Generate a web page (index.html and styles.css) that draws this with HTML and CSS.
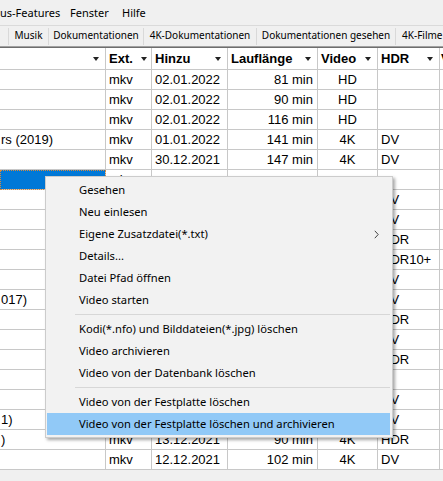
FILE: index.html
```html
<!DOCTYPE html>
<html lang="de">
<head>
<meta charset="utf-8">
<title>Filmliste</title>
<link rel="stylesheet" href="styles.css">
</head>
<body>
<div class="menubar">
  <span class="mi m1">us-Features</span>
  <span class="mi m2">Fenster</span>
  <span class="mi m3">Hilfe</span>
</div>
<div class="tabs">
  <div class="tab t0"></div>
  <div class="tab t1">Musik</div>
  <div class="tab t2">Dokumentationen</div>
  <div class="tab t3">4K-Dokumentationen</div>
  <div class="tab t4">Dokumentationen gesehen</div>
  <div class="tab t5">4K-Filme</div>
</div>
<div class="grid">
  <div class="row head">
    <div class="c c1"><span class="lbl"></span><i class="arr"></i></div>
    <div class="c c2"><span class="lbl">Ext.</span><i class="arr"></i></div>
    <div class="c c3"><span class="lbl">Hinzu</span><i class="arr"></i></div>
    <div class="c c4"><span class="lbl">Lauflänge</span><i class="arr"></i></div>
    <div class="c c5"><span class="lbl">Video</span><i class="arr"></i></div>
    <div class="c c6"><span class="lbl">HDR</span><i class="arr"></i></div>
    <div class="c c7"><span class="lbl">Ver</span></div>
  </div>
  <div class="row"><div class="c c1"></div><div class="c c2">mkv</div><div class="c c3">02.01.2022</div><div class="c c4">81 min</div><div class="c c5">HD</div><div class="c c6"></div><div class="c c7"></div></div>
  <div class="row"><div class="c c1"></div><div class="c c2">mkv</div><div class="c c3">02.01.2022</div><div class="c c4">90 min</div><div class="c c5">HD</div><div class="c c6"></div><div class="c c7"></div></div>
  <div class="row"><div class="c c1"></div><div class="c c2">mkv</div><div class="c c3">02.01.2022</div><div class="c c4">116 min</div><div class="c c5">HD</div><div class="c c6"></div><div class="c c7"></div></div>
  <div class="row"><div class="c c1">rs (2019)</div><div class="c c2">mkv</div><div class="c c3">01.01.2022</div><div class="c c4">141 min</div><div class="c c5">4K</div><div class="c c6">DV</div><div class="c c7"></div></div>
  <div class="row"><div class="c c1"></div><div class="c c2">mkv</div><div class="c c3">30.12.2021</div><div class="c c4">147 min</div><div class="c c5">4K</div><div class="c c6">DV</div><div class="c c7"></div></div>
  <div class="row"><div class="c c1 sel"></div><div class="c c2">mkv</div><div class="c c3"></div><div class="c c4"></div><div class="c c5"></div><div class="c c6"></div><div class="c c7"></div></div>
  <div class="row"><div class="c c1"></div><div class="c c2">mkv</div><div class="c c3">28.12.2021</div><div class="c c4">128 min</div><div class="c c5">4K</div><div class="c c6">DV</div><div class="c c7"></div></div>
  <div class="row"><div class="c c1"></div><div class="c c2">mkv</div><div class="c c3">27.12.2021</div><div class="c c4">112 min</div><div class="c c5">4K</div><div class="c c6">DV</div><div class="c c7"></div></div>
  <div class="row"><div class="c c1"></div><div class="c c2">mkv</div><div class="c c3">26.12.2021</div><div class="c c4">134 min</div><div class="c c5">4K</div><div class="c c6">HDR</div><div class="c c7"></div></div>
  <div class="row"><div class="c c1"></div><div class="c c2">mkv</div><div class="c c3">25.12.2021</div><div class="c c4">105 min</div><div class="c c5">4K</div><div class="c c6">HDR10+</div><div class="c c7"></div></div>
  <div class="row"><div class="c c1"></div><div class="c c2">mkv</div><div class="c c3">24.12.2021</div><div class="c c4">99 min</div><div class="c c5">4K</div><div class="c c6">DV</div><div class="c c7"></div></div>
  <div class="row"><div class="c c1">017)</div><div class="c c2">mkv</div><div class="c c3">23.12.2021</div><div class="c c4">121 min</div><div class="c c5">4K</div><div class="c c6">DV</div><div class="c c7"></div></div>
  <div class="row"><div class="c c1"></div><div class="c c2">mkv</div><div class="c c3">22.12.2021</div><div class="c c4">96 min</div><div class="c c5">4K</div><div class="c c6">HDR</div><div class="c c7"></div></div>
  <div class="row"><div class="c c1"></div><div class="c c2">mkv</div><div class="c c3">21.12.2021</div><div class="c c4">118 min</div><div class="c c5">4K</div><div class="c c6">DV</div><div class="c c7"></div></div>
  <div class="row"><div class="c c1"></div><div class="c c2">mkv</div><div class="c c3">20.12.2021</div><div class="c c4">109 min</div><div class="c c5">4K</div><div class="c c6">HDR</div><div class="c c7"></div></div>
  <div class="row"><div class="c c1"></div><div class="c c2">mkv</div><div class="c c3">19.12.2021</div><div class="c c4">93 min</div><div class="c c5">HD</div><div class="c c6"></div><div class="c c7"></div></div>
  <div class="row"><div class="c c1"></div><div class="c c2">mkv</div><div class="c c3">17.12.2021</div><div class="c c4">125 min</div><div class="c c5">4K</div><div class="c c6">DV</div><div class="c c7"></div></div>
  <div class="row"><div class="c c1">1)</div><div class="c c2">mkv</div><div class="c c3">15.12.2021</div><div class="c c4">131 min</div><div class="c c5">4K</div><div class="c c6">DV</div><div class="c c7"></div></div>
  <div class="row"><div class="c c1">)</div><div class="c c2">mkv</div><div class="c c3">13.12.2021</div><div class="c c4">90 min</div><div class="c c5">4K</div><div class="c c6">HDR</div><div class="c c7"></div></div>
  <div class="row"><div class="c c1"></div><div class="c c2">mkv</div><div class="c c3">12.12.2021</div><div class="c c4">102 min</div><div class="c c5">4K</div><div class="c c6">DV</div><div class="c c7"></div></div>
</div>

<div class="ctx">
  <div class="item">Gesehen</div>
  <div class="item">Neu einlesen</div>
  <div class="item sub">Eigene Zusatzdatei(*.txt)<svg class="chev" width="5" height="9" viewBox="0 0 5 9"><path d="M0.8 0.8 L4.2 4.5 L0.8 8.2" fill="none" stroke="#444" stroke-width="1"/></svg></div>
  <div class="item">Details...</div>
  <div class="item">Datei Pfad öffnen</div>
  <div class="item">Video starten</div>
  <div class="sep"></div>
  <div class="item">Kodi(*.nfo) und Bilddateien(*.jpg) löschen</div>
  <div class="item">Video archivieren</div>
  <div class="item">Video von der Datenbank löschen</div>
  <div class="sep"></div>
  <div class="item">Video von der Festplatte löschen</div>
  <div class="item hot">Video von der Festplatte löschen und archivieren</div>
</div>
</body>
</html>
```
FILE: styles.css
```css
html, body {
  margin: 0;
  padding: 0;
}
body {
  width: 443px;
  height: 481px;
  overflow: hidden;
  position: relative;
  background: #f0f0f0;
  font-family: "Noto Sans", "Open Sans", sans-serif;
  color: #000;
}

/* menu bar */
.menubar {
  height: 25px;
  display: flex;
  align-items: center;
  font-size: 11px;
  background: #f0f0f0;
  white-space: nowrap;
}
.mi { flex: none; }
.mi.m1 { width: 70px; }
.mi.m2 { width: 52px; }

/* tab strip */
.tabs {
  height: 19px;
  border-top: 1px solid #dadada;
  display: flex;
  font-size: 10px;
  white-space: nowrap;
  overflow: hidden;
  margin-bottom: 1px;
}
.tab {
  flex: none;
  box-sizing: border-box;
  border-right: 1px solid #d9d9d9;
  margin-top: 2px;
  height: 17px;
  line-height: 15px;
  text-align: center;
}
.t0 { width: 9px; }
.t1 { width: 40px; }
.t2 { width: 95px; }
.t3 { width: 113px; }
.t4 { width: 139px; }
.t5 { width: 60px; border-right: none; text-align: left; padding-left: 6px; }

/* grid */
.grid {
  background: #fff;
  border-top: 1px solid #a0a0a0;
  font-family: "Liberation Sans", Arial, sans-serif;
  font-size: 13px;
  width: 500px;
}
.row {
  display: grid;
  grid-template-columns: 106px 46px 76px 90px 60px 62px 60px;
  height: 20px;
}
.row.head {
  height: 22px;
  border-top: 1px solid #6d6d6d;
  font-weight: bold;
}
.c {
  box-sizing: border-box;
  border-right: 1px solid #c8c8c8;
  border-bottom: 1px solid #c8c8c8;
  padding: 0 3px;
  line-height: 19px;
  white-space: nowrap;
  overflow: hidden;
}
.c1 { padding-left: 1px; }
.c4 { text-align: right; padding-right: 4px; }
.c5 { text-align: center; }
.c7 { padding-left: 1px; border-right: none; }
.head .c {
  display: flex;
  align-items: center;
  line-height: 21px;
  text-align: left;
  padding-left: 3px;
  padding-right: 6px;
}
.head .c1 { padding-left: 1px; }
.head .c2 { padding-right: 4px; }
.head .c7 { padding-left: 1px; }
.head .c .lbl { flex: 1; }
.arr {
  display: block;
  flex: none;
  width: 0;
  height: 0;
  border-left: 3.5px solid transparent;
  border-right: 3.5px solid transparent;
  border-top: 4px solid #222;
}
.sel {
  background: #0078d7;
  outline: 1px dotted #d88a3c;
  outline-offset: -1px;
}

/* context menu */
.ctx {
  position: absolute;
  left: 45px;
  top: 176px;
  width: 348px;
  box-sizing: border-box;
  background: #f2f2f2;
  border: 1px solid #cccccc;
  padding: 2px 1px;
  box-shadow: 2px 2px 3px rgba(0, 0, 0, 0.35);
  font-size: 11.2px;
}
.item {
  position: relative;
  height: 22px;
  line-height: 22px;
  padding-left: 32px;
  margin: 0 1px 0 0;
  white-space: nowrap;
}
.item.hot { background: #91c9f7; }
.chev {
  position: absolute;
  right: 11px;
  top: 7px;
}
.sep {
  height: 7px;
  margin: 0 1px 0 28px;
  position: relative;
}
.sep::after {
  content: "";
  position: absolute;
  left: 0;
  right: 0;
  top: 3px;
  height: 1px;
  background: #d7d7d7;
}
```
